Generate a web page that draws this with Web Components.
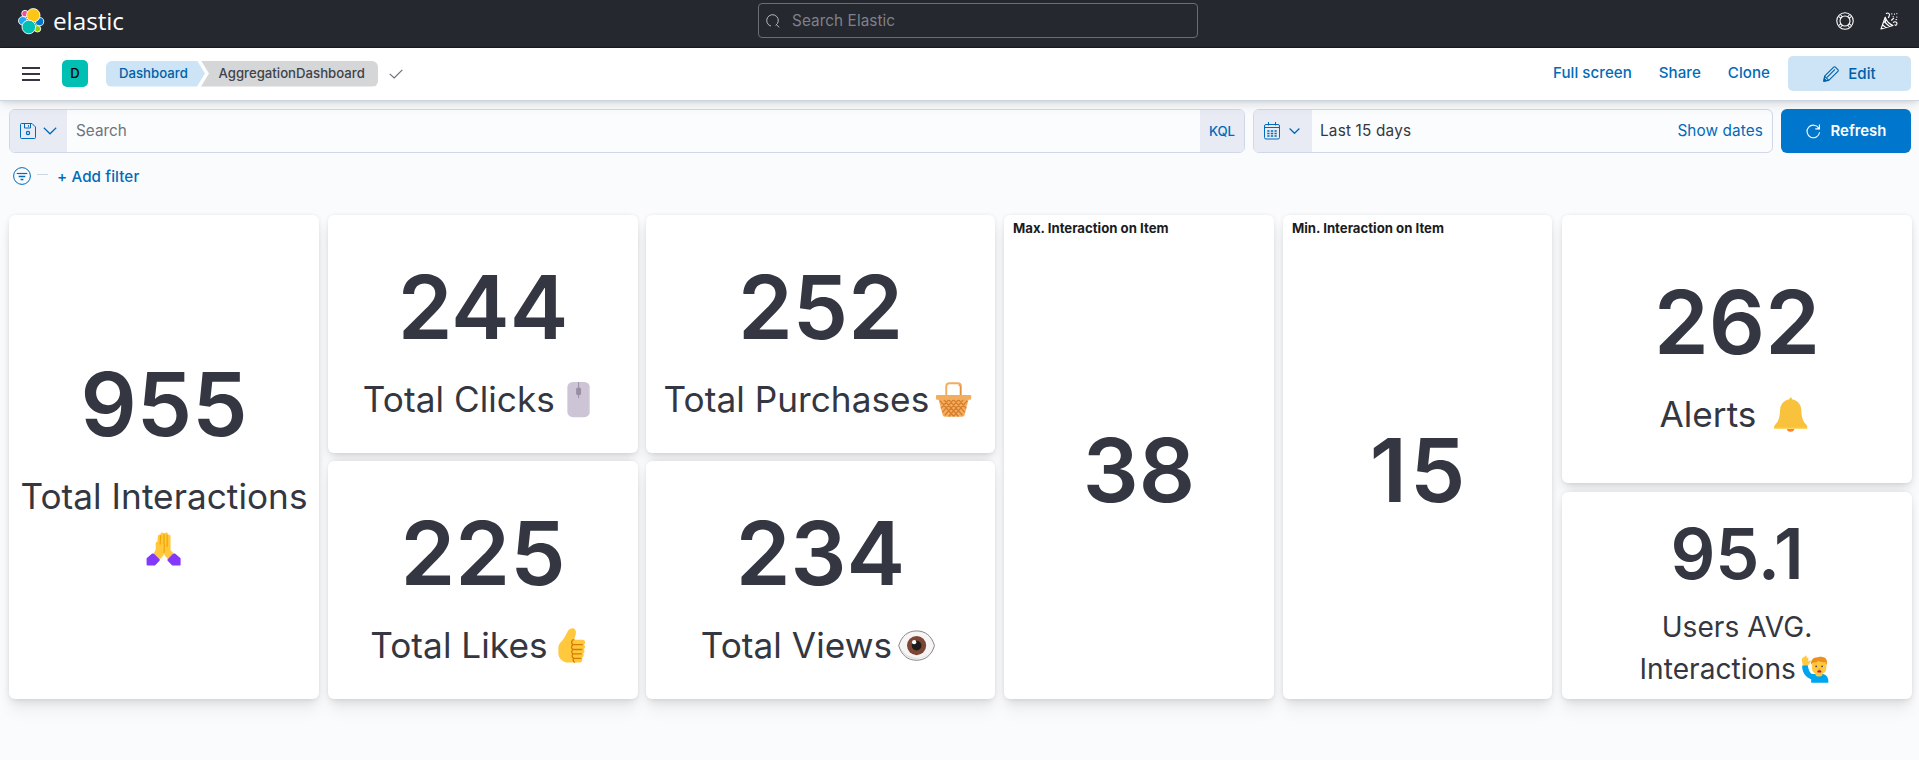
<!DOCTYPE html>
<html lang="en">
<head>
<meta charset="utf-8">
<title>AggregationDashboard - Elastic</title>
<style>
html,body{margin:0;height:100%}
body{background:#fafbfd;font-family:Inter,"Liberation Sans",sans-serif;color:#343741;overflow:hidden}
</style>
</head>
<body>
<kibana-page></kibana-page>
<script>
const define=(name,html)=>{
  const t=document.createElement('template');
  t.innerHTML=html;
  customElements.define(name,class extends HTMLElement{
    constructor(){super();this.attachShadow({mode:'open'}).append(t.content.cloneNode(true));}
  });
};

const ICONS={
  menu:['0 0 18 14','<path d="M0 1.1h18M0 7h18M0 12.9h18" stroke="currentColor" stroke-width="2"/>'],
  search:['0 0 14 14','<path d="M5 12.1A5.8 5.8 0 1 1 9.6 11.4M9.9 10.2l3.4 3.2" fill="none" stroke="currentColor" stroke-width="1"/>'],
  check:['0 0 14 10','<path d="M.7 4.9l4.5 4L13.3.9" fill="none" stroke="currentColor" stroke-width="1.2"/>'],
  down:['0 0 14 8','<path d="M.8.8L7 6.8 13.2.8" fill="none" stroke="currentColor" stroke-width="1.2"/>'],
  downs:['0 0 11 6','<path d="M.6.5L5.500 5.300 10.400.5" fill="none" stroke="currentColor" stroke-width="1.2"/>'],
  save:['0 0 16 16','<g fill="none" stroke="currentColor"><path d="M1.5.5H12L15.5 4v10.500a1 1 0 0 1-1 1h-13a1 1 0 0 1-1-1v-13a1 1 0 0 1 1-1zM4.500.5v4.500h6v-4.500M8.500 2.200v1.600"/><circle cx="8" cy="10" r="1.600" stroke-width="1.200"/></g>'],
  filter:['0 0 18 18','<g fill="none" stroke="currentColor"><circle cx="9" cy="9" r="8.400"/><path d="M3.700 6.500h10.600" stroke-width="1.200"/><path d="M5.700 9.600h6.600M7.600 12.600h2.800" stroke-width="1.500"/></g>'],
  calendar:['0 0 16 18','<g fill="none" stroke="currentColor"><rect x=".5" y="2.500" width="15" height="14.500" rx="1.500"/><path d="M.5 5.500h15" stroke-width="1.200"/><path d="M4.500 0v3.500M11.500 0v3.500"/><path d="M3.300 9h2.200M6.800 9h2.400M10.500 9h2.200M3.300 11.500h2.200M6.800 11.500h2.400M10.500 11.500h2.200M3.300 14h2.200M6.800 14h2.400M10.500 14h2.200" stroke-width="1.300"/></g>'],
  pencil:['0 0 16 16','<g fill="none" stroke="currentColor" stroke-width="1.100" stroke-linejoin="round"><path d="M.8 15.200l.8-5L10.700 1.100a1.200 1.200 0 0 1 1.700 0l2.500 2.500a1.200 1.200 0 0 1 0 1.700L5.800 14.400zM1.600 10.200l4.200 4.200M4 11.400l8-8"/><path d="M.8 15.200l.5-2.600 2.100 2.100z" fill="currentColor"/></g>'],
  refresh:['0 0 15 15','<path d="M12.800 4.300A6.300 6.300 0 1 0 13.600 8.300M13.400.6v4.300H9.300" fill="none" stroke="currentColor" stroke-width="1.100"/>'],
  buoy:['0 0 18 18','<g fill="none" stroke="currentColor" stroke-width="1.100"><circle cx="9" cy="9" r="8.200"/><circle cx="9" cy="9" r="5"/><path d="M3 4.700l2 1.800M4.700 3l1.800 2M15 4.700l-2 1.800M13.300 3l-1.800 2M3 13.300l2-1.800M4.700 15l1.800-2M15 13.300l-2-1.800M13.300 15l-1.800-2"/></g>'],
  party:['0 0 18 18','<g fill="none" stroke="currentColor" stroke-width="1.150" stroke-linejoin="round"><path d="M5.200 5.200L1 17l12-3.500a14 14 0 0 1-7.800-8.300zM4 9.500l5.500 5M2.700 13l3 2.500M5.500 7.500v3"/><path d="M6 1.800c2-1.800 4.200 0 3.300 2L8.300 6M11.300 8.500L14 5.800M13 10.400c3-1.600 4.800.4 3.600 2.400-.6.900-1.800.4-1.500-.4"/><path d="M11.800 1.200v1.500M14.500 1.500v1.300M16.800 1v1.200M13.200 4v1.200M16.800 4.500v1.300M15.500 7.600h1.600" stroke-width=".9"/></g>'],
  logo:['0 0 26 26','<g stroke="#fff" stroke-width=".9"><circle cx="7" cy="5.600" r="3.300" fill="#f04e98"/><circle cx="4.800" cy="12.800" r="4.300" fill="#1ba9f5"/><circle cx="21.600" cy="13.600" r="4.100" fill="#0077cc"/><circle cx="19.500" cy="20.800" r="3.200" fill="#93c90e"/><circle cx="15.300" cy="7.300" r="6.700" fill="#fec514"/><circle cx="10.800" cy="19" r="6.800" fill="#00bfb3"/></g>'],
  hands:['0 0 36 36','<path fill="#ffc83d" d="M17.800 2.300c-1.100-1.300-2.700-.6-2.900.8l-.6 1c-1.200-.5-2.100.3-2.200 1.500l-.4 5.400c-1.200-.2-1.800.8-1.800 2v6.200L7.300 24l6.200 5.700 3.900-4.200c.7-1 1-2 1-3 .1 1 .5 2.100 1.200 3l3.600 4.200L29.300 24l-4.200-4.400V5.600c0-1.400-.9-2-2.100-1.600l-.6-1c-.3-1.600-2.200-2-3-.7-.5-.7-1.200-.7-1.600 0z"/><path fill="none" stroke="#f5a400" stroke-width="1.200" d="M15 4.300l-.5 9.500M18.400 3.500v10M21.600 3.900l.1 12.500M18.400 22.500l.5-9"/><path fill="#8338fb" d="M.6 27.800l5.400-4.500c.8-.6 1.800-.4 2.500.2l5.300 5.400c.5.500.5 1 0 1.500l-4.600 5H1.600c-.6 0-1-.4-1-1zM35.400 27.800L30 23.300c-.8-.6-1.800-.4-2.500.2l-5.300 5.400c-.5.500-.5 1 0 1.500l4.600 5h7.600c.6 0 1-.4 1-1z"/>'],
  mouse:['0 0 36 36','<rect x="6.500" y="0" width="23" height="36" rx="5.500" fill="#cdc4d6"/><rect x="28.500" y="5" width="1" height="26" fill="#e1d9e8"/><path d="M18 0v16.500" stroke="#998ea4" stroke-width="1"/><rect x="15.500" y="5.500" width="5" height="8" rx="1.800" fill="#998ea4"/>'],
  basket:['0 0 36 36','<path d="M10.500 15V4.500q0-3.300 3.300-3.300h8.400q3.300 0 3.300 3.300V15" fill="none" stroke="#f3ad61" stroke-width="2"/><path d="M24.800 15V5q0-2-2-2" fill="none" stroke="#d67d29" stroke-width=".8"/><path d="M2.500 17.500h31l-4.300 16.200q-.5 1.800-2.200 1.800H9q-1.700 0-2.200-1.800z" fill="#f3ad61"/><path d="M4 19l14 16M8 18l15 17.300M13 18l14 16M18 18l11.500 13M23 18l8 9M32 19L18 35M28 18L13 35.300M23 18L9 34M18 18L6.500 31M13 18l-8 9" stroke="#d67d29" stroke-width="1.300"/><rect x="0" y="13.300" width="36" height="4.900" rx="1" fill="#f3ad61"/>'],
  thumb:['0 0 36 36','<g transform="translate(-1.500)"><path fill="#ffc83d" d="M19.500.4c3-.8 4.900 1.800 4.300 5.500L22.200 12h8.300c3 0 4 3.600 1.600 5 1.700 1.300 1.400 3.800-.2 4.700 1.300 1.300 1 3.600-.6 4.500 1.200 1.500.4 3.800-1.200 4.400 1.200 2.200-.2 4.700-2.500 4.700H16c-4.500 0-10-3.500-10-9.500v-5.500c0-5 4.200-6.500 6.200-10.500L16 2.500C16.800 1.300 18.200.7 19.500.4z"/><path fill="none" stroke="#d67d00" stroke-width="1.300" d="M22.200 12c-3 0-3.700 3.500-1.200 5-2.200 1.500-2 4 0 5-1.800 1.300-1.700 3.700 0 4.500-1.500 1.200-1.200 3.400.5 4.200-1 2.500 0 4 1.500 4.400M21 17h10M21 22h9.500M21 26.500h9M21.500 31h8"/></g>'],
  eye:['0 0 36 36','<path d="M-.3 18C2.700 8 9 3 18 3s15.300 5 18.300 15C33.300 28 27 33 18 33S2.700 28-.3 18z" fill="#f6f4f5" stroke="#777" stroke-width=".9"/><path d="M1.200 20a17 14 0 0 0 31 5 19 18 0 0 1-31-5z" fill="#e0dddf"/><circle cx="18" cy="18" r="9.800" fill="#7d4533"/><circle cx="18" cy="18" r="5" fill="#1c1c1c"/><circle cx="15.500" cy="14.500" r="2.200" fill="#fff"/>'],
  bell:['0 0 36 36','<circle cx="18" cy="31.500" r="4" fill="#ff822d"/><path fill="#f9c23c" d="M16.800 2.200C16.800 0 19.400 0 19.400 2.200c5.600.7 9.200 5.200 9.500 10.500.2 5.500.9 9.300 2.800 13l2.800 3.200c.5.700.6 1.500.6 2.500 0 1-.5 1.400-1.300 1.400H2.400c-.8 0-1.300-.5-1.300-1.400 0-1 .2-1.800.7-2.500L4.500 25.700c2-3.700 2.600-7.500 2.800-13 .3-5.300 4-9.800 9.500-10.500z"/><path fill="#ffd766" d="M1.100 31.500h34q0 1.300-1.300 1.300H2.400q-1.300 0-1.300-1.300z"/>'],
  man:['0 0 36 36','<path fill="#00a6ed" d="M1.500 13.500l7-.8c1 4.500 1.700 9 5.500 11.500h12.500c5 0 8 3.500 8.500 8.300v3H13V31C5 29 1 20 1.500 13.500z"/><path fill="#ffc83d" d="M2 12.500L1 5c-.2-1.500 1.500-1.700 1.800-.3L3 3c0-1.600 1.700-1.600 1.900-.1l.3-1.200c.3-1.400 2-1.200 2 .2L7.400 4c.6-1 2-.6 2 .8v4l1.500-1.500c1.500-1 2.300.5 1.400 1.700L8.800 13.500zM18.500 22h9v3c0 3.500-9 3.500-9 0z"/><rect x="14" y="5" width="18.500" height="20" rx="8.500" fill="#ffc83d"/><path fill="#ee8f1d" d="M13 12.500c-1-6 3-9.500 8-9.500 2-1.500 11-1.500 12 4 .6 2 .4 4-.5 6L31 9c-4 .6-7 0-9-1.500-1.500 2-3.500 2.200-7 2.500z"/><circle cx="19.500" cy="14.500" r="1.200" fill="#554155"/><circle cx="27" cy="14.500" r="1.200" fill="#554155"/><path d="M22.500 18h2" stroke="#e59600" stroke-width="1"/><ellipse cx="23.500" cy="21" rx="2.700" ry="1.500" fill="#bb1d3b"/>']
};
customElements.define('k-icon',class extends HTMLElement{
  constructor(){super();this.attachShadow({mode:'open'});}
  connectedCallback(){
    const [box,body]=ICONS[this.getAttribute('name')];
    this.shadowRoot.innerHTML=`<style>:host{display:inline-block;flex:none;line-height:0}svg{display:block;width:100%;height:100%;overflow:visible}</style><svg viewBox="${box}">${body}</svg>`;
  }
});

define('global-header',`
<style>
:host{display:grid;grid-template-columns:758px 440px 1fr;height:48px;box-sizing:border-box;background:#25282f;border-bottom:1px solid #1d1c26;color:#fff}
.brand{display:flex;align-items:center;padding:0 0 0 18px;height:42px;gap:9px}
.word{font:400 24.300px/30px "Open Sans",sans-serif;letter-spacing:-.05px}
.brand k-icon{width:26px;height:26px}
.find{box-sizing:border-box;height:35px;margin-top:3px;border:1px solid #6c6e75;border-radius:4px;display:flex;align-items:center;gap:12px;padding:0 7px;color:#7f8188;font-size:15.300px;line-height:20px;letter-spacing:.08px}
.find k-icon{width:14px;height:14px;color:#b7b9be}
.tools{display:flex;justify-content:flex-end;gap:26px;padding:12px 21px 0 0}
.tools k-icon{width:18px;height:18px}
</style>
<div class="brand"><k-icon name="logo"></k-icon><span class="word">elastic</span></div>
<div class="find"><k-icon name="search"></k-icon><span>Search Elastic</span></div>
<div class="tools"><k-icon name="buoy"></k-icon><k-icon name="party"></k-icon></div>`);

define('k-crumbs',`
<style>
:host{display:flex;font-size:13.200px;font-weight:500;line-height:25px;height:26px}
span{box-sizing:border-box;height:26px;white-space:nowrap}
.a{width:99px;padding-left:13px;background:#cce4f5;color:#0061a6;border-radius:6px 0 0 6px;clip-path:polygon(0 0,91px 0,99px 50%,91px 100%,0 100%)}
.b{width:177px;margin-left:-4px;padding-left:17.500px;background:#d5d6d8;color:#404349;border-radius:0 6px 6px 0;clip-path:polygon(0 0,100% 0,100% 100%,0 100%,8px 50%)}
</style>
<span class="a">Dashboard</span><span class="b">AggregationDashboard</span>`);

define('page-header',`
<style>
:host{display:flex;align-items:center;position:relative;z-index:1;height:53px;box-sizing:border-box;background:#fff;border-bottom:1px solid #cdd5e3;box-shadow:0 .9px 4px -1px rgba(0,0,0,.08),0 2.600px 8px -1px rgba(0,0,0,.08),0 5.700px 12px -1px rgba(0,0,0,.06);padding:0 8px 1px 22px}
.menu{width:18px;height:14px}
.space{width:26px;height:27px;line-height:27px;margin:0 18px 0 22px;border-radius:5px;background:#00bfb3;color:#000;font-size:13px;font-weight:500;text-align:center}
.check{width:14px;height:10px;margin-left:11px;color:#69707d}
.links{margin-left:auto;display:flex;align-items:center;color:#006bb8;font-weight:500;font-size:15.100px;line-height:20px;letter-spacing:.04px}
.links span{margin-right:27px;padding-bottom:2px}
.links .c{margin-right:18px}
.edit{display:flex;align-items:center;justify-content:center;gap:9px;width:123px;height:35px;background:#cce4f5;color:#0061a6;border-radius:5px}
.edit k-icon{width:16px;height:16px}
</style>
<k-icon class="menu" name="menu"></k-icon><div class="space">D</div>
<k-crumbs></k-crumbs><k-icon class="check" name="check"></k-icon>
<div class="links"><span>Full screen</span><span>Share</span><span class="c">Clone</span><div class="edit"><k-icon name="pencil"></k-icon>Edit</div></div>`);

define('query-bar',`
<style>
:host{display:block;padding:8px 8px 0 9px;color:#006bb8}
.row{display:flex;gap:8px;height:44px}
.field{display:flex;align-items:center;box-sizing:border-box;border:1px solid #cfd7e8;border-radius:6px;background:#fbfcfd;overflow:hidden;font-size:15.300px;line-height:20px}
.field>span{padding-bottom:1px}
.q{width:1236px}.date{width:520px}
.pre{display:flex;align-items:center;box-sizing:border-box;height:100%;background:#e8ebf3;flex:none}
.q .pre{width:57px;padding-left:10px;gap:7px}
.q .pre k-icon:first-child{width:16px;height:16px}
.q .down{width:14px;height:8px}
.date .pre{width:58px;padding-left:10px;gap:9px}
.date .pre k-icon:first-child{width:16px;height:18px}
.date .down{width:11px;height:6px}
.ph{padding-left:9px;color:#6e747f;flex:1}
.q .kql{width:44px;padding:0;justify-content:center;font-size:13.200px;font-weight:500}
.val{padding-left:8px;color:#343741;flex:1;letter-spacing:.2px}
.show{padding-right:9px;letter-spacing:.12px}
.go{display:flex;align-items:center;justify-content:center;gap:10px;flex:1;background:#0077cc;color:#fff;border-radius:6px;font-size:14.900px;font-weight:600}
.go k-icon{width:15px;height:15px}
.filters{display:flex;align-items:center;height:18px;margin-top:14px;padding-left:4px;font-size:15.200px;font-weight:500;letter-spacing:.1px}
.filters k-icon{width:18px;height:18px}
.filters span{padding-top:1px}
.dash{width:11px;height:1px;background:#cdd7e3;margin:0 9px 4px 6px}
</style>
<div class="row">
<div class="field q"><div class="pre"><k-icon name="save"></k-icon><k-icon class="down" name="down"></k-icon></div><span class="ph">Search</span><div class="pre kql">KQL</div></div>
<div class="field date"><div class="pre"><k-icon name="calendar"></k-icon><k-icon class="down" name="downs"></k-icon></div><span class="val">Last 15 days</span><span class="show">Show dates</span></div>
<div class="go"><k-icon name="refresh"></k-icon>Refresh</div>
</div>
<div class="filters"><k-icon name="filter"></k-icon><i class="dash"></i><span>+ Add filter</span></div>`);

define('metric-panel',`
<style>
:host{display:flex;flex-direction:column;background:#fff;border-radius:6px;box-shadow:0 .9px 4px -1px rgba(0,0,0,.08),0 2.600px 8px -1px rgba(0,0,0,.06),0 5.700px 12px -1px rgba(0,0,0,.05),0 15px 15px -1px rgba(0,0,0,.04);--n:88px;--l:35.200px}
::slotted([slot=title]){font-size:13.200px;font-weight:700;line-height:26px;height:26px;padding-left:9px;color:#1a1c21}
.body{flex:1;display:flex;flex-direction:column;justify-content:center;text-align:center;padding-top:1px}
.num{font-size:var(--n);line-height:1.473;font-weight:600;color:#343741}
.label{font-size:var(--l);line-height:1.5;font-weight:400;letter-spacing:.001em}
::slotted(k-icon){width:1em;height:1em;margin:0 .185em;vertical-align:-.150em}
:host(.small){--n:70.200px;--l:28.100px}
</style>
<slot name="title"></slot><div class="body"><div class="num"><slot name="value"></slot></div><div class="label"><slot></slot></div></div>`);

define('dashboard-grid',`
<style>
:host{display:flex;padding:30px 7px 0 9px;height:484px}
.col{display:flex;flex-direction:column;gap:8px;flex:none}
.col metric-panel{flex:1}
</style>
<div class="col" style="width:310px;margin-right:9px"><metric-panel><span slot="value">955</span>Total Interactions<br><k-icon name="hands"></k-icon></metric-panel></div>
<div class="col" style="width:310px;margin-right:8px"><metric-panel><span slot="value">244</span>Total Clicks<k-icon name="mouse"></k-icon></metric-panel><metric-panel><span slot="value">225</span>Total Likes<k-icon name="thumb"></k-icon></metric-panel></div>
<div class="col" style="width:349px;margin-right:9px"><metric-panel><span slot="value">252</span>Total Purchases<k-icon name="basket"></k-icon></metric-panel><metric-panel><span slot="value">234</span>Total Views<k-icon name="eye"></k-icon></metric-panel></div>
<div class="col" style="width:270px;margin-right:9px"><metric-panel><div slot="title">Max. Interaction on Item</div><span slot="value">38</span></metric-panel></div>
<div class="col" style="width:269px;margin-right:10px"><metric-panel><div slot="title">Min. Interaction on Item</div><span slot="value" style="letter-spacing:3px;margin-right:-3px">15</span></metric-panel></div>
<div class="col" style="width:350px;gap:9px"><metric-panel style="flex:0 0 268px"><span slot="value">262</span>Alerts <k-icon name="bell"></k-icon></metric-panel><metric-panel class="small"><span slot="value">95.1</span>Users AVG.<br>Interactions<k-icon name="man"></k-icon></metric-panel></div>`);

define('kibana-page',`
<style>:host{display:block;width:1919px;height:760px;overflow:hidden;background:#fafbfd}</style>
<global-header></global-header><page-header></page-header><query-bar></query-bar><dashboard-grid></dashboard-grid>`);
</script>
</body>
</html>
